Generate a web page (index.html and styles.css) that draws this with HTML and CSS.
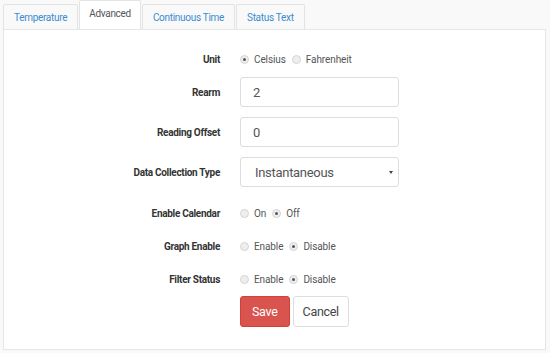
FILE: index.html
```html
<!DOCTYPE html>
<html lang="en">

<head>
    <meta charset="UTF-8">
    <meta name="viewport" content="width=device-width, initial-scale=1.0">
    <title>Advanced Settings</title>
    <link rel="stylesheet" href="styles.css">
</head>

<body>
    <!-- Pestañas -->
    <ul class="tabs">
        <li class="tab"><a href="#">Temperature</a></li>
        <li class="tab active"><a href="#">Advanced</a></li>
        <li class="tab"><a href="#">Continuous Time</a></li>
        <li class="tab"><a href="#">Status Text</a></li>
    </ul>

    <div class="panel">
        <form class="settings-form">
            <div class="form-group radio-group first">
                <label class="form-label">Unit</label>
                <div class="form-control-wrap">
                    <label class="radio"><input type="radio" name="unit" checked> Celsius</label>
                    <label class="radio"><input type="radio" name="unit"> Fahrenheit</label>
                </div>
            </div>

            <div class="form-group">
                <label class="form-label">Rearm</label>
                <div class="form-control-wrap">
                    <input type="text" class="input-field" value="2">
                </div>
            </div>

            <div class="form-group">
                <label class="form-label">Reading Offset</label>
                <div class="form-control-wrap">
                    <input type="text" class="input-field" value="0">
                </div>
            </div>

            <div class="form-group last-input">
                <label class="form-label">Data Collection Type</label>
                <div class="form-control-wrap">
                    <div class="select-field">
                        <span>Instantaneous</span>
                        <span class="caret"></span>
                    </div>
                </div>
            </div>

            <div class="form-group radio-group">
                <label class="form-label">Enable Calendar</label>
                <div class="form-control-wrap">
                    <label class="radio"><input type="radio" name="calendar"> On</label>
                    <label class="radio"><input type="radio" name="calendar" checked> Off</label>
                </div>
            </div>

            <div class="form-group radio-group">
                <label class="form-label">Graph Enable</label>
                <div class="form-control-wrap">
                    <label class="radio"><input type="radio" name="graph"> Enable</label>
                    <label class="radio"><input type="radio" name="graph" checked> Disable</label>
                </div>
            </div>

            <div class="form-group radio-group last-radio">
                <label class="form-label">Filter Status</label>
                <div class="form-control-wrap">
                    <label class="radio"><input type="radio" name="filter"> Enable</label>
                    <label class="radio"><input type="radio" name="filter" checked> Disable</label>
                </div>
            </div>

            <div class="form-group buttons">
                <span class="form-label"></span>
                <div class="form-control-wrap">
                    <button type="button" class="btn btn-danger">Save</button>
                    <button type="button" class="btn btn-default">Cancel</button>
                </div>
            </div>
        </form>
    </div>
</body>

</html>
```

FILE: styles.css
```css
/* Estilos generales */
body {
    font-family: Roboto, "Liberation Sans", sans-serif;
    background-color: #f9f9f9;
    margin: 0;
    padding: 0;
    color: #333;
}

/* Pestañas */
.tabs {
    display: flex;
    align-items: flex-end;
    list-style: none;
    margin: 0;
    padding: 2px 0 0 3px;
    height: 27px;
    position: relative;
    z-index: 1;
}

.tab {
    margin-right: 1px;
}

.tab a {
    display: block;
    height: 24px;
    line-height: 26px;
    padding: 0 10px;
    font-size: 10px;
    letter-spacing: -0.3px;
    color: #3a8ccf;
    text-decoration: none;
    background-color: #f9f9f9;
    border: 1px solid #e3e3e3;
    border-bottom: none;
    border-radius: 2px 2px 0 0;
}

.tab.active a {
    height: 28px;
    line-height: 25px;
    padding: 0 9px;
    color: #555;
    background-color: #fff;
}

/* Panel */
.panel {
    margin: 0 4px 0 3px;
    background-color: #fff;
    border: 1px solid #e6e6e6;
    padding: 19px 0 23px;
}

.form-group {
    display: flex;
    align-items: center;
    height: 30px;
    margin-bottom: 10px;
}

.form-group.last-input {
    margin-bottom: 13px;
}

.radio-group {
    height: 26px;
    margin-bottom: 7px;
}

.radio-group.first {
    height: 20px;
    margin-bottom: 8px;
}

.radio-group.last-radio {
    margin-bottom: 4px;
}

.form-group.buttons {
    margin-bottom: 0;
}

.form-label {
    width: 216px;
    flex-shrink: 0;
    text-align: right;
    font-size: 10px;
    letter-spacing: -0.3px;
    font-weight: bold;
    color: #333;
    padding-right: 20px;
}

.form-control-wrap {
    display: flex;
    align-items: center;
}

.radio {
    display: flex;
    align-items: center;
    font-size: 10px;
    letter-spacing: -0.1px;
    color: #555;
    margin-right: 6px;
}

.radio input {
    appearance: none;
    -webkit-appearance: none;
    width: 9px;
    height: 9px;
    margin: 0 5px 0 0;
    border: 1px solid #d4d4d4;
    border-radius: 50%;
    background-color: #eee;
    position: relative;
}

.radio input:checked::after {
    content: "";
    position: absolute;
    left: 2px;
    top: 2px;
    width: 3px;
    height: 3px;
    border-radius: 50%;
    background-color: #555;
}

.input-field,
.select-field {
    box-sizing: border-box;
    width: 159px;
    height: 30px;
    padding: 0 12px;
    font-family: inherit;
    font-size: 13px;
    letter-spacing: -0.3px;
    color: #555;
    border: 1px solid #ddd;
    border-radius: 3px;
    background-color: #fff;
}

.select-field {
    display: flex;
    align-items: center;
    justify-content: space-between;
    padding: 0 5px 0 14px;
}

.caret {
    width: 0;
    height: 0;
    border-left: 2px solid transparent;
    border-right: 2px solid transparent;
    border-top: 3px solid #444;
}

.btn {
    height: 31px;
    padding: 0 11px;
    font-family: inherit;
    font-size: 12.5px;
    letter-spacing: -0.3px;
    border-radius: 3px;
    cursor: pointer;
}

.btn-danger {
    background-color: #d9534f;
    border: 1px solid #d43f3a;
    color: #fff;
    margin-right: 3px;
}

.btn-default {
    background-color: #fff;
    border: 1px solid #ddd;
    color: #444;
    padding: 0 9px;
}
```
